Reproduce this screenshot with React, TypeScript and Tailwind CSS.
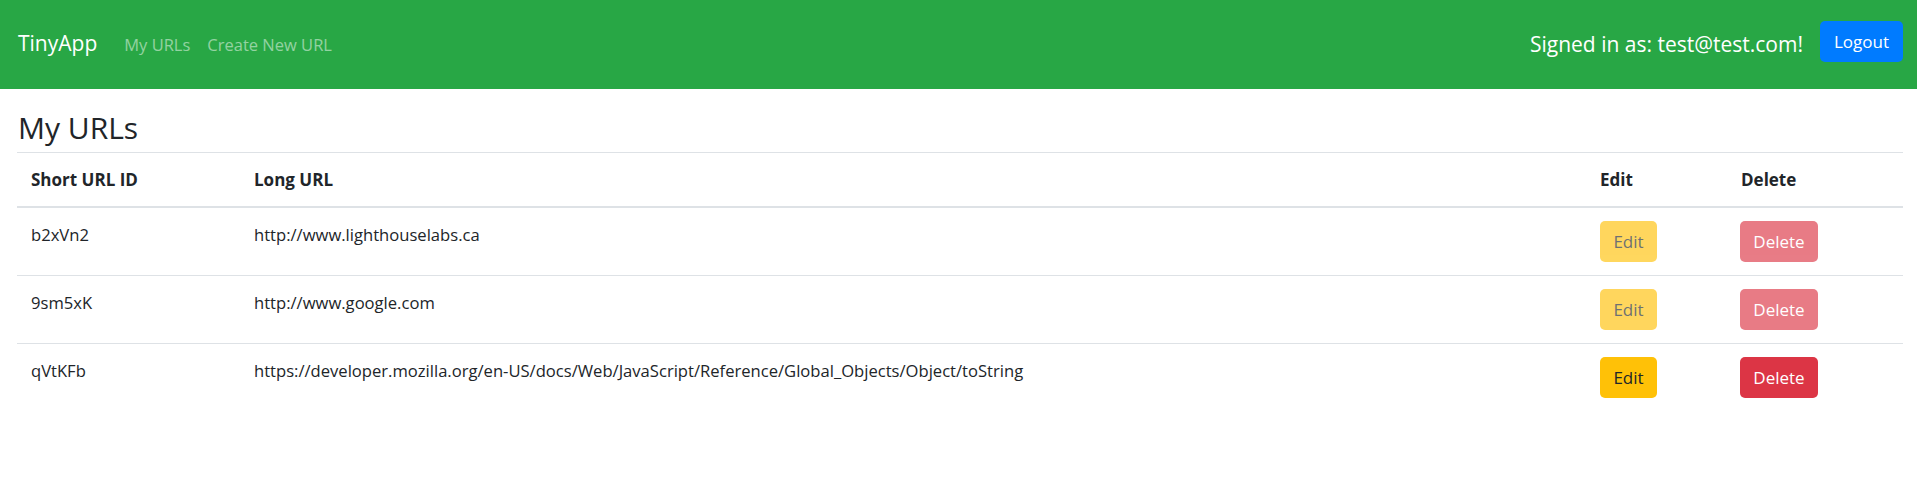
import React from "react";

const urls = [
  { id: "b2xVn2", longURL: "http://www.lighthouselabs.ca", owned: false },
  { id: "9sm5xK", longURL: "http://www.google.com", owned: false },
  {
    id: "qVtKFb",
    longURL:
      "https://developer.mozilla.org/en-US/docs/Web/JavaScript/Reference/Global_Objects/Object/toString",
    owned: true,
  },
];

export default function App() {
  return (
    <div className="min-h-screen bg-white text-[#212529] font-['Open_Sans',sans-serif]">
      {/* Navbar */}
      <nav className="h-[89px] bg-[#28a745] flex items-center pl-[18px] pr-[14px]">
        <a href="#" className="text-[21px] text-white mr-[27px] pb-[1px]">
          TinyApp
        </a>
        <div className="flex items-center gap-[17px] text-[16.5px] text-white/50 pt-[2px]">
          <a href="#">My URLs</a>
          <a href="#">Create New URL</a>
        </div>
        <div className="ml-auto flex items-center gap-[17px]">
          <span className="text-[21px] text-white">Signed in as: test@test.com!</span>
          <button className="h-[41px] w-[83px] rounded-[5px] bg-[#007bff] text-white text-[17px] mb-[6px]">
            Logout
          </button>
        </div>
      </nav>

      {/* Page */}
      <main className="pl-[17px] pr-[14px]">
        <h2 className="text-[30px] leading-[32px] pt-[23px] pb-[8px] pl-[1px]">My URLs</h2>
        <div className="border-t border-[#dee2e6]">
          <div className="grid grid-cols-[223px_1346px_141px_176px] h-[55px] items-center border-b-2 border-[#dee2e6] font-bold text-[17px]">
            <div className="pl-[14px]">Short URL ID</div>
            <div className="pl-[14px]">Long URL</div>
            <div className="pl-[14px]">Edit</div>
            <div className="pl-[14px]">Delete</div>
          </div>
          {urls.map((url, i) => (
            <div
              key={url.id}
              className={
                "grid grid-cols-[223px_1346px_141px_176px] h-[68px] text-[16.6px] " +
                (i < urls.length - 1 ? "border-b border-[#dee2e6]" : "")
              }
            >
              <div className="pl-[14px] pt-[15px]">{url.id}</div>
              <div className="pl-[14px] pt-[15px]">{url.longURL}</div>
              <div className="pl-[14px] pt-[13px]">
                <button
                  disabled={!url.owned}
                  className="h-[41px] w-[57px] rounded-[5px] bg-[#ffc107] text-[#212529] text-[17px] disabled:opacity-65"
                >
                  Edit
                </button>
              </div>
              <div className="pl-[13px] pt-[13px]">
                <button
                  disabled={!url.owned}
                  className="h-[41px] w-[78px] rounded-[5px] bg-[#dc3545] text-white text-[17px] disabled:opacity-65"
                >
                  Delete
                </button>
              </div>
            </div>
          ))}
        </div>
      </main>
    </div>
  );
}
